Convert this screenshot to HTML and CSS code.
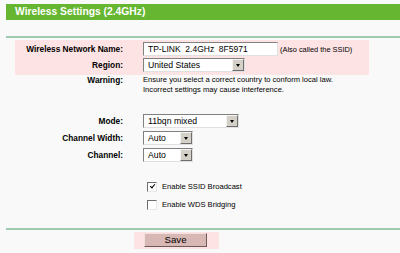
FILE: index.html
```html
<!DOCTYPE html>
<html lang="en">
<head>
    <meta charset="UTF-8">
    <meta name="viewport" content="width=device-width, initial-scale=1.0">
    <title>Wireless Settings</title>
    <link rel="stylesheet" href="styles.css">
</head>
<body>

    <div class="title">Wireless Settings (2.4GHz)</div>
    <div class="rule"></div>

    <form class="form">
        <div class="mark">
            <div class="row">
                <label class="lbl" for="ssid">Wireless Network Name:</label>
                <div class="val">
                    <input id="ssid" class="text-input" type="text" value="TP-LINK  2.4GHz  8F5971">
                    <span class="note">(Also called the SSID)</span>
                </div>
            </div>
            <div class="row">
                <label class="lbl" for="region">Region:</label>
                <div class="val">
                    <span class="select region">
                        <select id="region"><option>United States</option></select>
                        <span class="drop"><i></i></span>
                    </span>
                </div>
            </div>
        </div>

        <div class="row warn">
            <div class="lbl">Warning:</div>
            <div class="val">Ensure you select a correct country to conform local law.<br>Incorrect settings may cause interference.</div>
        </div>

        <div class="group">
            <div class="row">
                <label class="lbl" for="mode">Mode:</label>
                <div class="val">
                    <span class="select mode">
                        <select id="mode"><option>11bqn mixed</option></select>
                        <span class="drop"><i></i></span>
                    </span>
                </div>
            </div>
            <div class="row">
                <label class="lbl" for="width">Channel Width:</label>
                <div class="val">
                    <span class="select short">
                        <select id="width"><option>Auto</option></select>
                        <span class="drop"><i></i></span>
                    </span>
                </div>
            </div>
            <div class="row">
                <label class="lbl" for="channel">Channel:</label>
                <div class="val">
                    <span class="select short">
                        <select id="channel"><option>Auto</option></select>
                        <span class="drop"><i></i></span>
                    </span>
                </div>
            </div>
        </div>

        <div class="checks">
            <label class="check"><input type="checkbox" checked> Enable SSID Broadcast</label>
            <label class="check"><input type="checkbox"> Enable WDS Bridging</label>
        </div>
    </form>

    <div class="rule bottom"></div>
    <div class="save-bar">
        <button class="save" type="button">Save</button>
    </div>

</body>
</html>
```

FILE: styles.css
```css
body {
    margin: 0;
    padding-top: 4px;
    background: #f9f9f9;
    font-family: "Liberation Sans", Arial, sans-serif;
    font-size: 7.6px;
    color: #000;
}
.title {
    margin-left: 6px;
    height: 16px;
    line-height: 16px;
    padding-left: 9px;
    background: #66b631;
    color: #fff;
    font-weight: bold;
    font-size: 10.3px;
}
.rule {
    margin: 16px 0 0 6px;
    height: 2px;
    background: #9fcab0;
}
.rule.bottom {
    margin-top: 17px;
}
.form {
    margin: 0;
}
.row {
    display: grid;
    grid-template-columns: 123px 1fr;
    column-gap: 20px;
    align-items: center;
    height: 14px;
}
.lbl {
    text-align: right;
    font-weight: bold;
    font-size: 8.3px;
}
.val {
    display: flex;
    align-items: center;
    gap: 2px;
}
.mark {
    margin: 2px 0 0 15px;
    width: 354px;
    padding: 2px 0 3px;
    background: #fde3e3;
    display: flex;
    flex-direction: column;
    gap: 2px;
}
.mark .row {
    grid-template-columns: 108px 1fr;
}
.text-input {
    box-sizing: border-box;
    width: 135px;
    height: 14px;
    margin: 0;
    padding: 0 4px;
    border: 1px solid;
    border-color: #808080 #e0e0e0 #e0e0e0 #808080;
    background: #fff;
    font-family: inherit;
    font-size: 8.5px;
    white-space: pre;
}
.note {
    font-size: 7.4px;
}
.warn {
    height: auto;
    align-items: start;
    line-height: 10px;
}
.group {
    margin-top: 19px;
    display: flex;
    flex-direction: column;
    gap: 3px;
}
.select {
    box-sizing: border-box;
    display: flex;
    height: 14px;
    border: 1px solid;
    border-color: #808080 #e0e0e0 #e0e0e0 #808080;
    background: #fff;
}
.select select {
    appearance: none;
    flex: 1;
    min-width: 0;
    border: 0;
    margin: 0;
    padding: 0 4px;
    background: transparent;
    font-family: inherit;
    font-size: 8.7px;
    color: #000;
}
.region {
    width: 102px;
}
.mode {
    width: 96px;
}
.short {
    width: 50px;
}
.drop {
    box-sizing: border-box;
    width: 12px;
    display: flex;
    align-items: center;
    justify-content: center;
    background: #d4d0c8;
    border: 1px solid;
    border-color: #f4f4f4 #6e6e6e #6e6e6e #f4f4f4;
}
.drop i {
    width: 0;
    height: 0;
    border-left: 2.5px solid transparent;
    border-right: 2.5px solid transparent;
    border-top: 3px solid #000;
}
.checks {
    margin: 18px 0 0 147px;
    display: flex;
    flex-direction: column;
    gap: 5px;
}
.check {
    display: flex;
    align-items: center;
    gap: 5px;
    height: 13px;
}
.check input {
    appearance: none;
    box-sizing: border-box;
    width: 10px;
    height: 10px;
    margin: 0;
    border: 1px solid;
    border-color: #6e6e6e #e8e8e8 #e8e8e8 #6e6e6e;
    background: #fff;
    position: relative;
}
.check input:checked::after {
    content: "";
    position: absolute;
    left: 2.5px;
    top: 0.5px;
    width: 2px;
    height: 4px;
    border: solid #000;
    border-width: 0 1.5px 1.5px 0;
    transform: rotate(40deg);
}
.save-bar {
    margin: 2px 0 0 134px;
    width: 75px;
    padding: 1px 0 2px 10px;
    background: #fde3e3;
}
.save {
    display: block;
    box-sizing: border-box;
    width: 63px;
    height: 14px;
    margin: 0;
    padding: 0;
    border: 1px solid;
    border-color: #f0e0de #6a5a58 #6a5a58 #f0e0de;
    background: #d8b8b4;
    font-family: inherit;
    font-size: 9.7px;
    color: #000;
    line-height: 12px;
}
```
